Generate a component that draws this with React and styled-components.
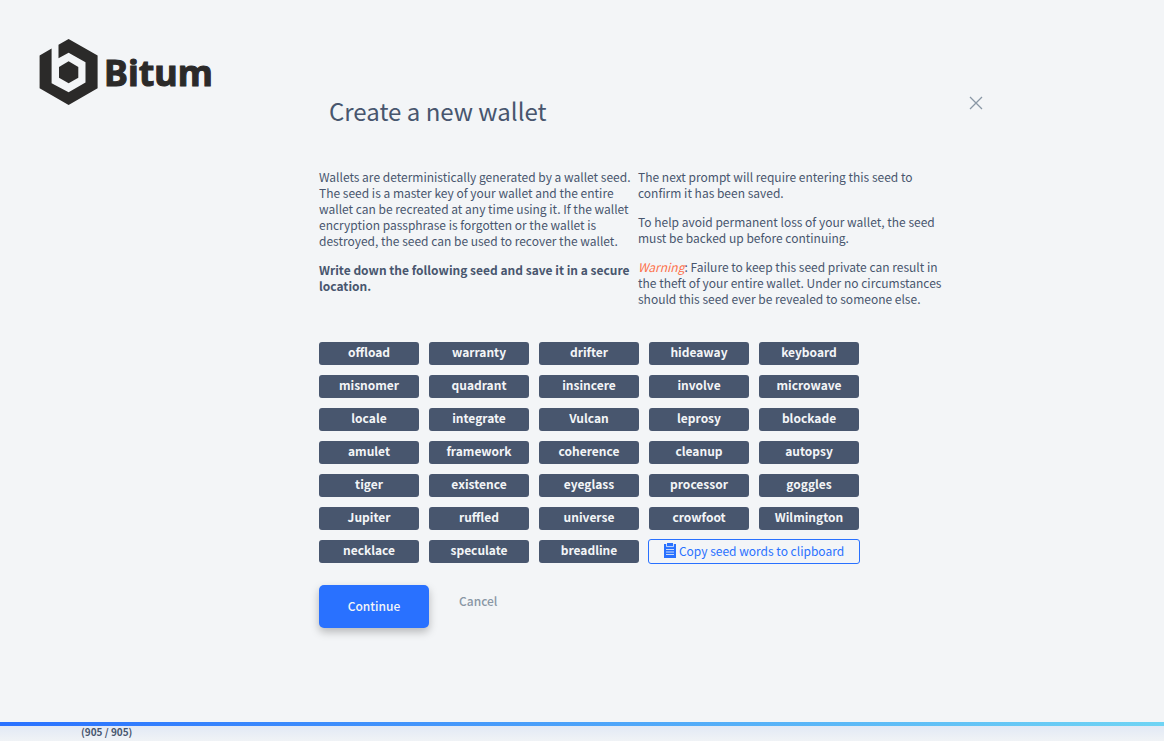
import React from "react";
import styled, { createGlobalStyle } from "styled-components";

const GlobalStyle = createGlobalStyle`
  *, *::before, *::after { box-sizing: border-box; }
  body {
    margin: 0;
    background: #f3f5f7;
    color: #48566e;
    font-family: "Noto Sans CJK SC", "Noto Sans", sans-serif;
    font-size: 12px;
    line-height: 16px;
  }
  button { font: inherit; cursor: pointer; }
`;

const Page = styled.div`
  display: flex;
  flex-direction: column;
  min-height: 100vh;
`;

const Body = styled.div`
  display: grid;
  grid-template-columns: 319px minmax(0, 1fr);
  flex: 1;
`;

const Sidebar = styled.aside`
  padding: 39px 0 0 39px;
`;

const Logo = styled.a`
  display: flex;
  align-items: flex-start;
  gap: 5px;
  color: #2b2a29;
  text-decoration: none;
`;

const LogoName = styled.span`
  font-family: "Noto Sans", sans-serif;
  font-size: 36px;
  font-weight: 700;
  line-height: 67px;
  -webkit-text-stroke: 1px currentColor;
`;

const Main = styled.main`
  max-width: 668px;
  padding-top: 91px;
`;

const Header = styled.header`
  display: flex;
  justify-content: space-between;
  align-items: flex-start;
  padding: 0 4px 0 10px;
  margin-bottom: 38px;
`;

const Title = styled.h1`
  margin: 0;
  font-size: 24px;
  font-weight: 400;
  line-height: 40px;
`;

const CloseButton = styled.button`
  display: flex;
  padding: 5px 0;
  border: 0;
  background: none;
  color: #8997a5;
`;

const Notes = styled.section`
  display: grid;
  grid-template-columns: 312px 308px;
  column-gap: 7px;
  margin-bottom: 35px;
`;

const Note = styled.p`
  margin: 0 0 13px;
  font-weight: ${(p) => (p.$strong ? 700 : 400)};
  &:last-child { margin-bottom: 0; }
`;

const Warning = styled.em`
  color: #fd714b;
`;

const SeedGrid = styled.ul`
  display: grid;
  grid-template-columns: repeat(5, 100px);
  gap: 10px;
  margin: 0 0 22px;
  padding: 0;
  list-style: none;
`;

const SeedWord = styled.li`
  height: 23px;
  border-radius: 3px;
  background: #48566e;
  color: #f3f5f7;
  font-weight: 700;
  line-height: 20px;
  text-align: center;
`;

const CopyCell = styled.li`
  grid-column: span 2;
  display: flex;
  margin: -1px;
`;

const CopyButton = styled.button`
  display: flex;
  flex: 1;
  align-items: center;
  justify-content: center;
  gap: 3px;
  height: 25px;
  padding: 0 0 2px;
  border: 1px solid #2971ff;
  border-radius: 3px;
  background: transparent;
  color: #2971ff;
`;

const Actions = styled.div`
  display: flex;
  align-items: flex-start;
  gap: 30px;
`;

const ContinueButton = styled.button`
  width: 110px;
  height: 43px;
  padding: 0 0 2px;
  border: 0;
  border-radius: 5px;
  background: #2971ff;
  box-shadow: 0 4px 8px rgba(0, 0, 0, 0.25);
  color: #f3f5f7;
  font-weight: 500;
`;

const CancelButton = styled.button`
  padding: 8px 0;
  border: 0;
  background: none;
  color: #8997a5;
  font-weight: 500;
`;

const Footer = styled.footer`
  height: 19px;
  border-top: 4px solid;
  border-image: linear-gradient(90deg, #2971ff, #6fd4f4) 1;
  background: linear-gradient(#e2e9f5, #f0f3f6);
`;

const SyncStatus = styled.p`
  margin: 0;
  padding-left: 81px;
  font-size: 10px;
  font-weight: 700;
  line-height: 12px;
`;

const words = [
  "offload", "warranty", "drifter", "hideaway", "keyboard",
  "misnomer", "quadrant", "insincere", "involve", "microwave",
  "locale", "integrate", "Vulcan", "leprosy", "blockade",
  "amulet", "framework", "coherence", "cleanup", "autopsy",
  "tiger", "existence", "eyeglass", "processor", "goggles",
  "Jupiter", "ruffled", "universe", "crowfoot", "Wilmington",
  "necklace", "speculate", "breadline",
];

const LogoMark = () => (
  <svg width="60" height="66" viewBox="0 0 60 66" fill="currentColor" aria-hidden="true">
    <path d="M29.6 0 58.6 16.5V49.3L29.6 66 .6 49.3V16.5L12.6 9.6V44.2L29.6 53.2 46.5 43.5V23.3L29.6 13.7 19.5 19.3V5.7Z" />
    <path d="M29.6 22.3 39.3 28V38.8L29.6 44.2 20 38.8V28Z" />
  </svg>
);

const CloseIcon = () => (
  <svg width="14" height="14" viewBox="0 0 14 14" fill="none" stroke="currentColor" strokeWidth="1.3" aria-hidden="true">
    <path d="M1 1 13 13M13 1 1 13" />
  </svg>
);

const ClipboardIcon = () => (
  <svg width="12" height="15" viewBox="0 0 12 15" aria-hidden="true">
    <path fill="currentColor" d="M0 1H3V0H9V1H12V15H0Z" />
    <path stroke="#f3f5f7" strokeWidth=".8" fill="none" d="M2.5 1V3.6H9.5V1M2 6.5H10M2 9H10M2 11.5H10" />
  </svg>
);

export default function App() {
  return (
    <Page>
      <GlobalStyle />
      <Body>
        <Sidebar>
          <Logo href="#">
            <LogoMark />
            <LogoName>Bitum</LogoName>
          </Logo>
        </Sidebar>
        <Main>
          <Header>
            <Title>Create a new wallet</Title>
            <CloseButton type="button" aria-label="Close"><CloseIcon /></CloseButton>
          </Header>
          <Notes>
            <div>
              <Note>
                Wallets are deterministically generated by a wallet seed. The seed is a master key of
                your wallet and the entire wallet can be recreated at any time using it. If the wallet
                encryption passphrase is forgotten or the wallet is destroyed, the seed can be used to
                recover the wallet.
              </Note>
              <Note $strong>Write down the following seed and save it in a secure location.</Note>
            </div>
            <div>
              <Note>The next prompt will require entering this seed to confirm it has been saved.</Note>
              <Note>
                To help avoid permanent loss of your wallet, the seed must be backed up before
                continuing.
              </Note>
              <Note>
                <Warning>Warning</Warning>: Failure to keep this seed private can result in the theft
                of your entire wallet. Under no circumstances should this seed ever be revealed to
                someone else.
              </Note>
            </div>
          </Notes>
          <SeedGrid>
            {words.map((word) => (
              <SeedWord key={word}>{word}</SeedWord>
            ))}
            <CopyCell>
              <CopyButton type="button">
                <ClipboardIcon />
                Copy seed words to clipboard
              </CopyButton>
            </CopyCell>
          </SeedGrid>
          <Actions>
            <ContinueButton type="button">Continue</ContinueButton>
            <CancelButton type="button">Cancel</CancelButton>
          </Actions>
        </Main>
      </Body>
      <Footer>
        <SyncStatus>(905 / 905)</SyncStatus>
      </Footer>
    </Page>
  );
}
